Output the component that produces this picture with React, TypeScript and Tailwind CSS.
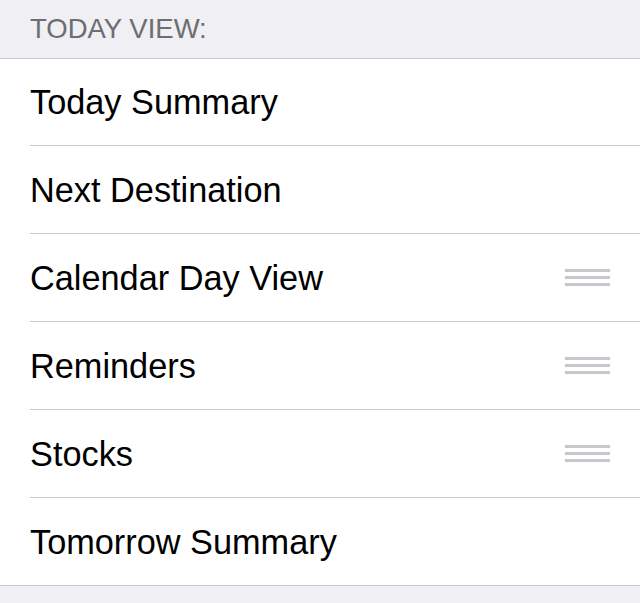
const items = [
  { label: "Today Summary", handle: false },
  { label: "Next Destination", handle: false },
  { label: "Calendar Day View", handle: true },
  { label: "Reminders", handle: true },
  { label: "Stocks", handle: true },
  { label: "Tomorrow Summary", handle: false },
];

function DragHandle() {
  return (
    <div className="flex w-[45px] flex-col gap-[4px]">
      <span className="block h-[3px] bg-[#c7c7cc]" />
      <span className="block h-[3px] bg-[#c7c7cc]" />
      <span className="block h-[3px] bg-[#c7c7cc]" />
    </div>
  );
}

export default function App() {
  return (
    <div
      className="min-h-[603px] w-[640px] bg-[#efeff4]"
      style={{ fontFamily: '"Liberation Sans", Arial, sans-serif' }}
    >
      <div className="h-[59px] border-b border-[#c8c7cc] pl-[30px] pt-[15px] text-[27.5px] leading-[27px] text-[#6d6d72]">
        TODAY VIEW:
      </div>
      <ul className="border-b border-[#c8c7cc] bg-white">
        {items.map((item, i) => {
          const last = i === items.length - 1;
          return (
            <li key={item.label} className="pl-[30px]">
              <div
                className={
                  (i === 0 || last ? "h-[87px] " : "h-[88px] ") +
                  (last ? "" : "border-b border-[#c8c7cc] ") +
                  "flex items-center justify-between pr-[30px]"
                }
              >
                <span className="text-[34.3px] leading-[34px] text-black">{item.label}</span>
                {item.handle ? <DragHandle /> : null}
              </div>
            </li>
          );
        })}
      </ul>
    </div>
  );
}
